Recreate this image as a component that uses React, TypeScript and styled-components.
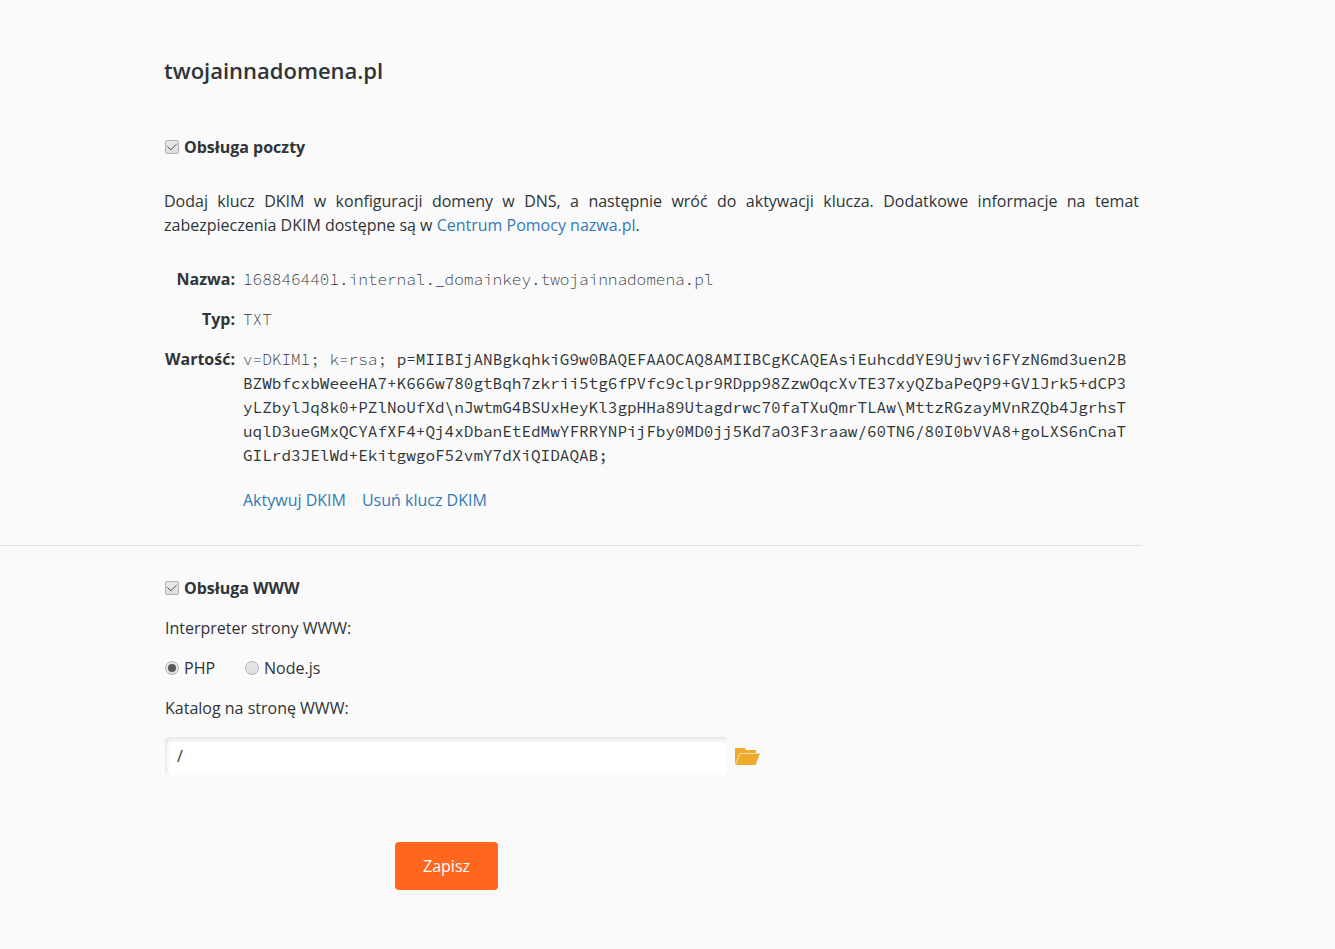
import React, { useState } from "react";
import styled, { createGlobalStyle } from "styled-components";

const GlobalStyle = createGlobalStyle`
  *, *::before, *::after { box-sizing: border-box; }
  body {
    margin: 0;
    background: #fafafa;
    color: #2f3437;
    font-family: "Open Sans", sans-serif;
    font-size: 16px;
    line-height: 24px;
  }
`;

const Page = styled.main`
  padding: 55px 194px 59px 0;
`;

const Section = styled.section`
  padding-left: 164px;
`;

const Title = styled.h1`
  margin: 0 0 50px;
  font-size: 22px;
  line-height: 30px;
  font-weight: 600;
`;

const Choice = styled.label<{ $strong?: boolean }>`
  display: flex;
  width: fit-content;
  align-items: center;
  gap: 5px;
  padding-left: 1px;
  font-weight: ${(p) => (p.$strong ? 700 : 400)};
`;

const Mark = styled.span`
  display: grid;
  width: 14px;
  height: 14px;

  > * {
    grid-area: 1 / 1;
  }

  svg {
    pointer-events: none;
  }
`;

const Toggle = styled.input`
  appearance: none;
  width: 14px;
  height: 14px;
  margin: 0;
  border: 1px solid #b2b2b2;
  border-radius: ${(p) => (p.type === "radio" ? "50%" : "2px")};
  background: linear-gradient(#e9e9e9, #dedede);
`;

const Intro = styled.p`
  margin: 30px 2px 30px 0;
  text-align: justify;
`;

const Link = styled.a`
  color: #337ab7;
  text-decoration: none;
`;

const Records = styled.dl`
  display: grid;
  grid-template-columns: 71px minmax(0, 1fr);
  gap: 16px 8px;
  margin: 0;
`;

const Term = styled.dt`
  font-weight: 700;
  text-align: right;
`;

const Value = styled.dd`
  margin: 0;
  font-family: "Source Code Pro", "Liberation Mono", monospace;
  font-weight: 300;
  overflow-wrap: anywhere;
`;

const PublicKey = styled.span`
  font-weight: 400;
`;

const Actions = styled.div`
  display: flex;
  gap: 16px;
  margin: 21px 0 0 79px;
`;

const Divider = styled.hr`
  height: 1px;
  margin: 33px 0 30px;
  border: 0;
  background: #dddddd;
`;

const Form = styled.form`
  display: flex;
  flex-direction: column;
  align-items: flex-start;
  gap: 16px;
`;

const Caption = styled.label`
  padding: 0 0 1px 1px;
`;

const Interpreter = styled.fieldset`
  display: contents;

  legend {
    padding: 0 0 0 1px;
  }
`;

const Radios = styled.div`
  display: flex;
  gap: 29px;
`;

const PathRow = styled.div`
  display: flex;
  align-items: center;
  gap: 8px;
  width: 100%;
  padding-left: 1px;
`;

const PathInput = styled.input`
  flex: 0 1 562px;
  min-width: 0;
  height: 38px;
  padding: 0 12px;
  border: 0;
  border-radius: 4px;
  background: #ffffff;
  box-shadow: inset 2px 3px 4px rgba(0, 0, 0, 0.1);
  color: inherit;
  font: inherit;
`;

const BrowseButton = styled.button`
  display: flex;
  padding: 0;
  border: 0;
  background: none;
  cursor: pointer;
`;

const Footer = styled.div`
  display: flex;
  justify-content: center;
  width: 100%;
  max-width: 565px;
  padding-top: 51px;
`;

const SaveButton = styled.button`
  height: 48px;
  padding: 0 28px;
  border: 0;
  border-radius: 4px;
  background: #ff671f;
  color: #ffffff;
  font: inherit;
  font-weight: 500;
  cursor: pointer;
`;

const keyParts = [
  "p=MIIBIjANBgkqhkiG9w0BAQEFAAOCAQ8AMIIBCgKCAQEAsiEuhcddYE9Ujwvi6FYzN6md3uen2B",
  "BZWbfcxbWeeeHA7+K666w780gtBqh7zkrii5tg6fPVfc9clpr9RDpp98ZzwOqcXvTE37xyQZbaPeQP9+GV1Jrk5+dCP3",
  "yLZbylJq8k0+PZlNoUfXd\\nJwtmG4BSUxHeyKl3gpHHa89Utagdrwc70faTXuQmrTLAw\\MttzRGzayMVnRZQb4JgrhsT",
  "uqlD3ueGMxQCYAfXF4+Qj4xDbanEtEdMwYFRRYNPijFby0MD0jj5Kd7aO3F3raaw/60TN6/80I0bVVA8+goLXS6nCnaT",
  "GILrd3JElWd+EkitgwgoF52vmY7dXiQIDAQAB;",
];

function CheckOption({ label }: { label: string }) {
  const [checked, setChecked] = useState(true);
  return (
    <Choice $strong>
      <Mark>
        <Toggle type="checkbox" checked={checked} onChange={(e) => setChecked(e.target.checked)} />
        {checked && (
          <svg width="14" height="14" viewBox="0 0 14 14" fill="none" stroke="#4a4e50" strokeWidth="1" aria-hidden="true">
            <path d="M2.3 6.3 L5.8 9.8 L11.7 4" />
          </svg>
        )}
      </Mark>
      {label}
    </Choice>
  );
}

function RadioOption({ label, checked, onSelect }: { label: string; checked: boolean; onSelect: () => void }) {
  return (
    <Choice>
      <Mark>
        <Toggle type="radio" name="interpreter" checked={checked} onChange={onSelect} />
        {checked && (
          <svg width="14" height="14" viewBox="0 0 14 14" aria-hidden="true">
            <circle cx="7" cy="7" r="4" fill="#5a5a5a" />
          </svg>
        )}
      </Mark>
      {label}
    </Choice>
  );
}

function FolderIcon() {
  return (
    <svg width="25" height="17" viewBox="0 0 25 17" aria-hidden="true">
      <path d="M0 0h10l1 2h10v4H5L0 17z" fill="#efa92d" />
      <path d="M5 5.5h20L20.5 17H0.5z" fill="#efa92d" />
      <path d="M0.5 16.5 4.8 5.5H25" fill="none" stroke="#f9dca8" strokeWidth="1" />
    </svg>
  );
}

export default function App() {
  const [interpreter, setInterpreter] = useState("PHP");
  const [path, setPath] = useState("/");

  return (
    <>
      <GlobalStyle />
      <Page>
        <Section>
          <Title>twojainnadomena.pl</Title>
          <CheckOption label="Obsługa poczty" />
          <Intro>
            Dodaj klucz DKIM w konfiguracji domeny w DNS, a następnie wróć do aktywacji klucza. Dodatkowe
            informacje na temat zabezpieczenia DKIM dostępne są w <Link href="#pomoc">Centrum Pomocy nazwa.pl</Link>.
          </Intro>
          <Records>
            <Term>Nazwa:</Term>
            <Value>1688464401.internal._domainkey.twojainnadomena.pl</Value>
            <Term>Typ:</Term>
            <Value>TXT</Value>
            <Term>Wartość:</Term>
            <Value>
              v=DKIM1; k=rsa;{" "}
              <PublicKey>
                {keyParts.map((part, i) => (
                  <React.Fragment key={part}>
                    {i > 0 && <wbr />}
                    {part}
                  </React.Fragment>
                ))}
              </PublicKey>
            </Value>
          </Records>
          <Actions>
            <Link href="#aktywuj">Aktywuj DKIM</Link>
            <Link href="#usun">Usuń klucz DKIM</Link>
          </Actions>
        </Section>
        <Divider />
        <Section>
          <Form onSubmit={(e) => e.preventDefault()}>
            <CheckOption label="Obsługa WWW" />
            <Interpreter>
              <legend>Interpreter strony WWW:</legend>
              <Radios>
                {["PHP", "Node.js"].map((name) => (
                  <RadioOption
                    key={name}
                    label={name}
                    checked={interpreter === name}
                    onSelect={() => setInterpreter(name)}
                  />
                ))}
              </Radios>
            </Interpreter>
            <Caption htmlFor="path">Katalog na stronę WWW:</Caption>
            <PathRow>
              <PathInput id="path" value={path} onChange={(e) => setPath(e.target.value)} />
              <BrowseButton type="button" aria-label="Wybierz katalog">
                <FolderIcon />
              </BrowseButton>
            </PathRow>
            <Footer>
              <SaveButton type="submit">Zapisz</SaveButton>
            </Footer>
          </Form>
        </Section>
      </Page>
    </>
  );
}
